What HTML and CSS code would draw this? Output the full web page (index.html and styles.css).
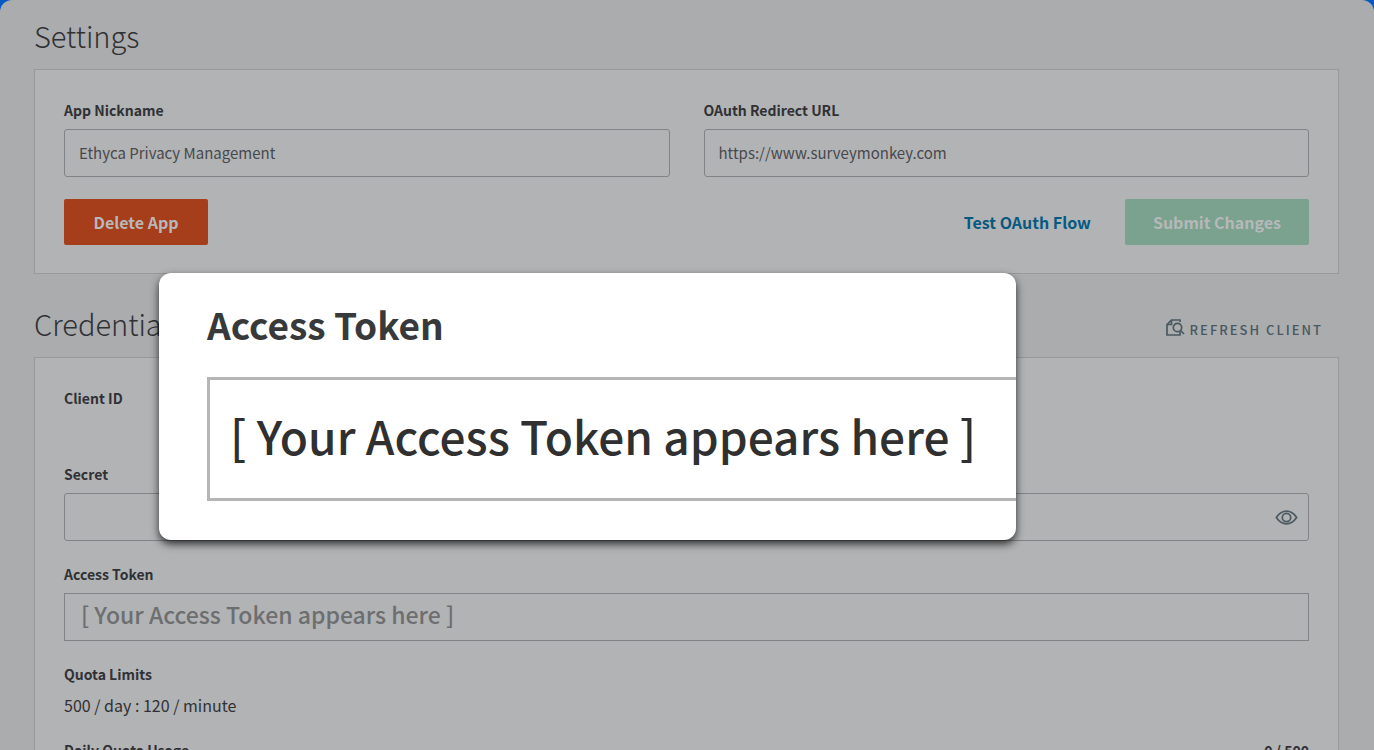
FILE: index.html
```html
<!DOCTYPE html>
<html lang="en">
<head>
  <meta charset="UTF-8">
  <title>App Settings</title>
  <link rel="stylesheet" href="styles.css">
</head>

<body>
  <main class="page">
    <div class="section-header">
      <h1>Settings</h1>
    </div>
    <form class="card">
      <div class="field-row">
        <div class="field">
          <label for="nickname">App Nickname</label>
          <input id="nickname" type="text" value="Ethyca Privacy Management">
        </div>
        <div class="field">
          <label for="redirect">OAuth Redirect URL</label>
          <input id="redirect" type="text" value="https://www.surveymonkey.com">
        </div>
      </div>
      <div class="actions">
        <button class="btn btn-delete" type="button">Delete App</button>
        <a class="test-link" href="#">Test OAuth Flow</a>
        <button class="btn btn-submit" type="submit">Submit Changes</button>
      </div>
    </form>

    <div class="section-header credentials-header">
      <h1>Credentials</h1>
      <button class="refresh-button" type="button">
        <svg width="19" height="18" viewBox="0 0 19 18" fill="none" stroke="currentColor" stroke-width="1.7">
          <path d="M14 3V1H5.500L1 5.500V16H14V13M5.500 1V5.500H1"/>
          <circle cx="11.500" cy="8.500" r="4.200"/>
          <path d="M14.500 11.500L18 15"/>
        </svg>
        REFRESH CLIENT
      </button>
    </div>
    <section class="card credentials">
      <div class="field client-id">
        <h2>Client ID</h2>
      </div>
      <div class="field">
        <label for="secret">Secret</label>
        <div class="secret-box">
          <input id="secret" type="password">
          <button class="eye-button" type="button" aria-label="Show secret">
            <svg width="23" height="15" viewBox="0 0 24 16" fill="none" stroke="currentColor" stroke-width="1.9">
              <path d="M1.200 8C4 3.800 7.600 1.300 12 1.300S20 3.800 22.800 8C20 12.200 16.400 14.700 12 14.700S4 12.200 1.200 8Z"/>
              <circle cx="12" cy="8" r="4.500"/>
            </svg>
          </button>
        </div>
      </div>
      <div class="field">
        <label for="token">Access Token</label>
        <input id="token" class="token-input" type="text" value="[ Your Access Token appears here ]" readonly>
      </div>
      <div class="field">
        <h2>Quota Limits</h2>
        <p class="quota">500 / day : 120 / minute</p>
      </div>
      <div class="usage">
        <h2>Daily Quota Usage</h2>
        <h2>0 / 500</h2>
      </div>
    </section>
  </main>

  <div class="callout">
    <label for="callout-token">Access Token</label>
    <input id="callout-token" type="text" value="[ Your Access Token appears here ]" readonly>
  </div>
</body>
</html>
```

FILE: styles.css
```css
* {
  box-sizing: border-box;
}

body {
  margin: 0;
  height: 100vh;
  overflow: hidden;
  background-color: #0858c4;
  color: #303134;
  font-family: "Noto Sans CJK SC", "Open Sans", sans-serif;
}

h1, h2, p {
  margin: 0;
}

input, button {
  font-family: inherit;
}

.page {
  min-height: 100vh;
  padding: 17px 35px 0 34px;
  background-color: #abacae;
  border-radius: 12px 12px 0 0;
}

/* Section titles */
.section-header {
  display: flex;
  justify-content: space-between;
  align-items: center;
  margin-bottom: 16px;
}

.credentials-header {
  margin-top: 31px;
}

h1 {
  font-size: 29px;
  font-weight: 300;
  line-height: 36px;
}

.refresh-button {
  display: flex;
  align-items: center;
  gap: 5px;
  margin-right: 16px;
  padding: 14px 0 0;
  border: none;
  background: none;
  color: #485860;
  font-size: 13px;
  font-weight: 500;
  line-height: 20px;
  letter-spacing: 2px;
}

.refresh-button svg {
  margin-bottom: 4px;
}

/* Cards */
.card {
  padding: 30px 29px 28px;
  background-color: #b2b3b5;
  border: 1px solid #98999b;
}

.field-row {
  display: grid;
  grid-template-columns: 1fr 1fr;
  gap: 34px;
}

.field label,
h2 {
  display: block;
  font-size: 14px;
  font-weight: 700;
  line-height: 20px;
}

.field input {
  display: block;
  width: 100%;
  height: 48px;
  margin-top: 9px;
  padding: 0 14px 2px;
  background: none;
  border: 1px solid #828386;
  border-radius: 3px;
  color: #48494c;
  font-size: 15px;
}

.actions {
  display: flex;
  align-items: center;
  margin-top: 22px;
}

.btn {
  height: 46px;
  padding: 0 28px 1px;
  border: none;
  border-radius: 2px;
  color: #b7b8ba;
  font-size: 16px;
  font-weight: 700;
}

.btn-delete {
  min-width: 144px;
  background-color: #a63e1b;
}

.btn-submit {
  background-color: #7aa28e;
}

.test-link {
  margin: 0 34px 0 auto;
  color: #065a80;
  font-size: 16px;
  font-weight: 700;
  text-decoration: none;
}

.credentials {
  display: flex;
  flex-direction: column;
  gap: 23px;
}

.client-id {
  height: 53px;
}

.secret-box {
  display: flex;
  align-items: center;
  margin-top: 9px;
  border: 1px solid #828386;
  border-radius: 3px;
}

.secret-box input {
  height: 46px;
  margin: 0;
  border: none;
}

.eye-button {
  display: flex;
  padding: 0;
  margin-right: 10px;
  border: none;
  background: none;
  color: #4c5b63;
}

.field .token-input {
  padding: 0 16px 6px;
  border-radius: 0;
  color: #6d6e70;
  font-size: 23px;
  font-weight: 500;
}

.quota {
  margin-top: 9px;
  font-size: 16px;
  line-height: 24px;
}

.usage {
  display: flex;
  justify-content: space-between;
}

/* Enlarged token panel over the page */
.callout {
  position: absolute;
  top: 273px;
  left: 159px;
  right: 358px;
  padding: 27px 0 39px 48px;
  background-color: #fff;
  border-radius: 12px;
  box-shadow: 0 4px 8px rgba(0, 0, 0, 0.75);
}

.callout label {
  display: block;
  color: #38393a;
  font-size: 37px;
  font-weight: 700;
  line-height: 48px;
}

.callout input {
  display: block;
  width: 100%;
  height: 124px;
  margin-top: 29px;
  padding: 0 0 8px 20px;
  background-color: #fff;
  border: 3px solid #b5b5b5;
  border-right: none;
  border-radius: 0;
  color: #303030;
  font-size: 46px;
  font-weight: 500;
}
```
